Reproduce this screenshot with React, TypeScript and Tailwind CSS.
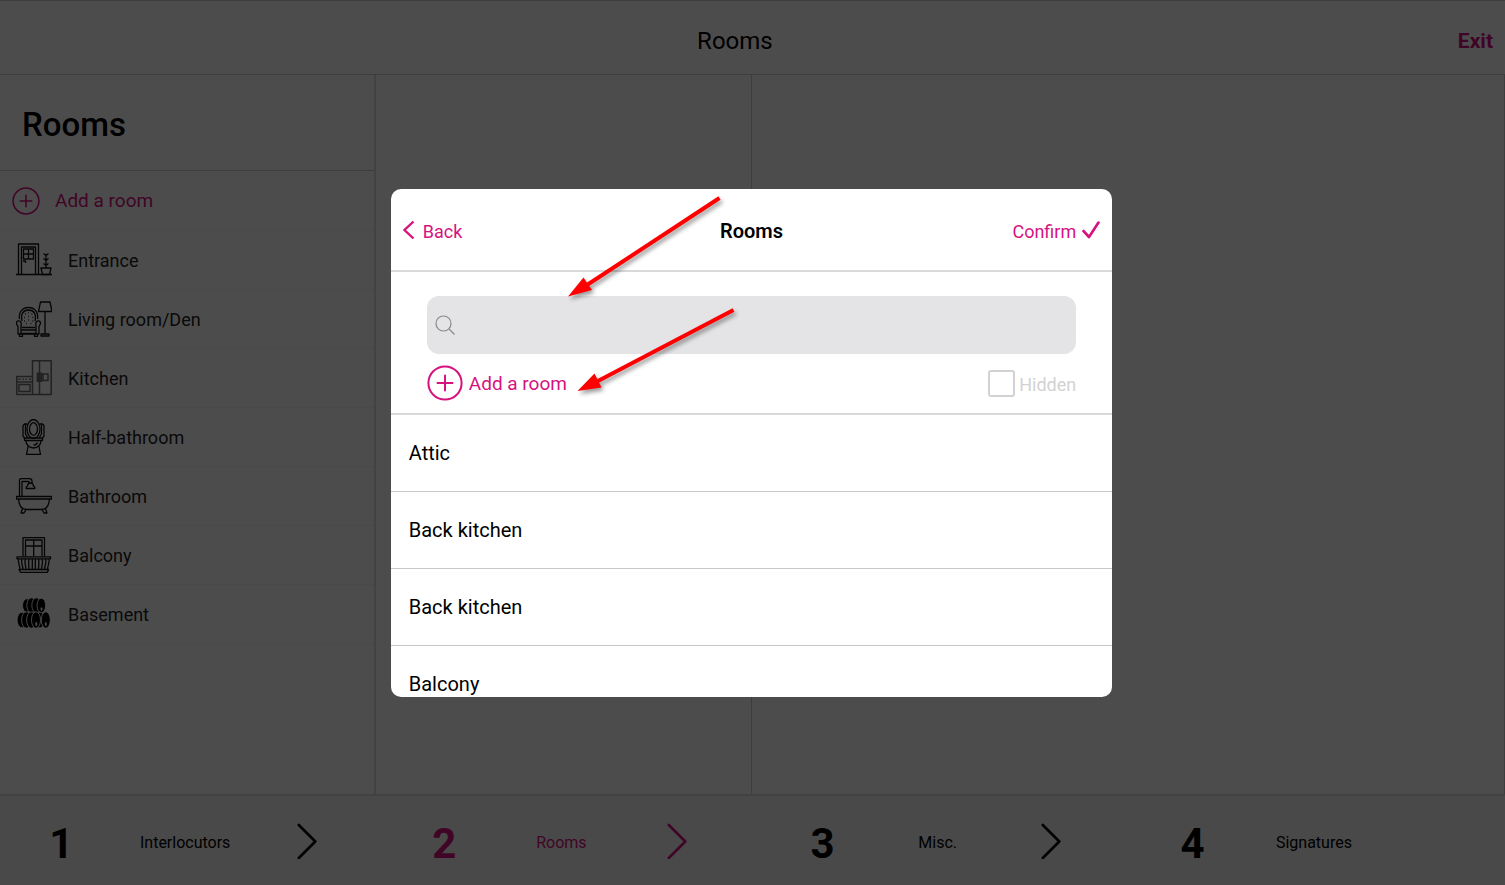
import type { ReactNode } from 'react'

type Room = { label: string; icon: ReactNode }
type Step = { label: string; active?: boolean }

const roomIcons = {
  entrance: (
    <>
      <path d="M0 32.5h36M2.5 32V2h20v30M5.5 32V5h14v27" />
      <path d="M7.5 7h10v10h-10zM12.5 7v10M7.5 12h10M7 19h2.5v2" />
      <path d="M25 26h10l-1.5 6.5h-7zM30 26V12M27.500 11.500l2.500 2 2.500-2M27.500 16.500l2.500 2 2.500-2M27.500 21.500l2.500 2 2.500-2" />
    </>
  ),
  living: (
    <>
      <path d="M24.500 1h9.500l2 9.500H22.500zM29 10.500v22.500M25 33h8v2h-8z" />
      <path d="M3.500 18c-1-7 3-11.500 9-11.500s10 4.500 9 11.500" />
      <path d="M6 20c-1.500-7 1-11 6.500-11s8 4 6.500 11" />
      <path d="M5 32.500h15V26c0-1.500-.5-3 0-4.500 1-2.500 4.500-2 4.500.5 0 2-1.500 2.500-1.500 4v7H2v-7c0-1.500-1.500-2-1.500-4 0-2.500 3.500-3 4.500-.5.5 1.500 0 3 0 4.500zM5 29h15M6 26.500h13M3.500 33v2.500h3V33M18.500 33v2.500h3V33" />
      <path d="M9 13h.8M12.300 11.500h.8M15.500 13h.8M8 16.500h.8M12.300 15.500h.8M16.500 16.500h.8M8 20h.8M12.300 19h.8M16.500 20h.8M10 22.500h.8M14.500 22.500h.8" />
    </>
  ),
  kitchen: (
    <g stroke="#707070" strokeWidth="1.500">
      <path d="M16.500.8h18.700v33.700H16.500zM23.500.8v33.700M.8 16.500h15.700v18H.8zM.8 22h15.700M3 24.500h11v7H3z" />
      <path d="M2.500 19.200h2M6.500 19.200h1.500M9.500 19.200H11M13 19.200h2M27 14h5v6.500h-5z" />
      <path d="M21.800 12.500v9.500M25.300 12.500v9.500" strokeWidth="2.400" />
    </g>
  ),
  toilet: (
    <>
      <path d="M11.500 5H8.500L7 6.500V17l1.500 2M23.500 5h3L28 6.500V17l-1.500 2M9.500 5v10l2.500 4M25.500 5v10L23 19" />
      <ellipse cx="17.500" cy="10" rx="6.500" ry="9.500" />
      <ellipse cx="17.500" cy="10" rx="4" ry="6.300" />
      <path d="M8.500 19h18v2.500h-18zM10 21.500c0 4 3 7.500 7.500 7.500s7.500-3.500 7.500-7.500M12 27.500l-1.500 8h14l-1.500-8M17.500 26c2 0 3.500-1 4-2.500" />
    </>
  ),
  bath: (
    <>
      <path d="M3.500 18.500V2.500c0-1.200.8-2 2-2H13c2 0 3 1 3 2.500V5M6 18.500V3.500h7V5" />
      <path d="M11.500 8c.3-2 1.300-3 3-3s2.700 1 3 3l1.300 1v1.500h-8.600V9z" />
      <path d="M.5 18.500h35V21H.5zM2.500 21c.5 7 2.500 10.500 8 10.500h15c5.500 0 7.500-3.500 8-10.500M6.500 30.500L5 35h3l2-3.500M29.500 30.500L31 35h-3l-2-3.500" />
    </>
  ),
  balcony: (
    <>
      <path d="M7 19.500V.7h21.500v18.800M9.500 19.500V3H26v16.500M17.700 3v16.500M10 9h16" />
      <path d="M1 19.800h33.500v2H1zM3 32.500h29.500L31.500 35.300h-27z" />
      <path d="M2.500 22c-1 3 1.500 7 1.500 10.500M6 22c-1.500 3 1 7 1 10.500M9.500 22c-1.500 3 .5 7 .5 10.500M13 22c-1 3 0 7 0 10.500M16.300 22v10.500M19.300 22v10.500M22.500 22c1 3 0 7 0 10.500M26 22c1.500 3-.5 7-.5 10.500M29.500 22c1.500 3-1 7-1 10.500M33 22c1 3-1.500 7-1.500 10.500" />
    </>
  ),
  barrels: (
    <g fill="#000" stroke="#fff" strokeWidth="0.900">
      <ellipse cx="11" cy="9.500" rx="4.500" ry="6.800" />
      <ellipse cx="15.500" cy="9.300" rx="4.700" ry="7.500" />
      <ellipse cx="20.500" cy="9.300" rx="4.700" ry="7.500" />
      <ellipse cx="25.300" cy="9.500" rx="4.300" ry="7.300" />
      <ellipse cx="6" cy="24" rx="4.900" ry="7.700" />
      <ellipse cx="10.500" cy="24" rx="4.900" ry="8.200" />
      <ellipse cx="15.500" cy="24" rx="4.900" ry="8.200" />
      <ellipse cx="24" cy="24" rx="4.500" ry="8" />
      <ellipse cx="20" cy="24" rx="4.500" ry="8.200" />
      <ellipse cx="29.800" cy="24" rx="4.500" ry="8.200" />
      <g fill="#fff" stroke="none">
        <ellipse cx="25.500" cy="13" rx="1" ry="1.700" />
        <ellipse cx="20.300" cy="28" rx="1" ry="1.900" />
        <ellipse cx="29.800" cy="28" rx="1" ry="1.900" />
      </g>
    </g>
  ),
}

const rooms: Room[] = [
  { label: 'Entrance', icon: roomIcons.entrance },
  { label: 'Living room/Den', icon: roomIcons.living },
  { label: 'Kitchen', icon: roomIcons.kitchen },
  { label: 'Half-bathroom', icon: roomIcons.toilet },
  { label: 'Bathroom', icon: roomIcons.bath },
  { label: 'Balcony', icon: roomIcons.balcony },
  { label: 'Basement', icon: roomIcons.barrels },
]

const roomTypes = ['Attic', 'Back kitchen', 'Back kitchen', 'Balcony']

const steps: Step[] = [
  { label: 'Interlocutors' },
  { label: 'Rooms', active: true },
  { label: 'Misc.' },
  { label: 'Signatures' },
]

function PlusCircle({ className }: { className: string }) {
  return (
    <svg viewBox="0 0 36 36" className={className} fill="none" stroke="currentColor" strokeWidth="2">
      <circle cx="18" cy="18" r="16.600" />
      <path d="M18 10.500v15M10.500 18h15" strokeLinecap="round" />
    </svg>
  )
}

function Sidebar() {
  return (
    <aside className="flex w-1/4 shrink-0 flex-col border-r-2 border-[#dcdcdc]">
      <h2 className="flex h-24 items-center border-b border-[#cccccc] px-[22px] pt-1 text-[33px] font-medium text-black">
        Rooms
      </h2>
      <button
        type="button"
        className="flex h-[60px] items-center gap-[15px] border-b border-[#f4f4f4] px-3 text-[19px] text-[#d6127f]"
      >
        <PlusCircle className="size-7" />
        <span className="pt-0.5">Add a room</span>
      </button>
      <ul>
        {rooms.map((room) => (
          <li key={room.label} className="border-b border-[#f4f4f4]">
            <a href="#room" className="flex h-[58px] items-center gap-4 px-4 text-[18px] text-[#222222]">
              <svg
                viewBox="0 0 36 36"
                className="size-9"
                fill="none"
                stroke="#111"
                strokeWidth="1.300"
                strokeLinejoin="round"
              >
                {room.icon}
              </svg>
              {room.label}
            </a>
          </li>
        ))}
      </ul>
    </aside>
  )
}

function StepBar() {
  return (
    <nav className="flex h-[91px] shrink-0 border-t-2 border-[#dcdcdc] bg-[#f4f4f4]">
      {steps.map((step, i) => (
        <a
          key={step.label}
          href="#step"
          className={`flex flex-1 items-center justify-around pr-[26px] pl-4 ${step.active ? 'text-[#d6127f]' : 'text-black'}`}
        >
          <span className="pt-1.5 text-[42px] leading-none font-bold">{i + 1}</span>
          <span className="pt-1 text-base">{step.label}</span>
          <svg
            viewBox="0 0 20 36"
            className={`h-9 w-5 ${i === steps.length - 1 ? 'invisible' : ''}`}
            fill="none"
            stroke="currentColor"
            strokeWidth="2.600"
            strokeLinecap="round"
            strokeLinejoin="round"
          >
            <path d="M1.800 2L18.300 18.500 1.800 35" />
          </svg>
        </a>
      ))}
    </nav>
  )
}

/* red pointers to the search box and the add button */
function Pointers() {
  return (
    <svg
      viewBox="0 0 360 220"
      className="pointer-events-none absolute top-0 left-0 h-[220px] w-[360px] drop-shadow-[2px_3px_2px_rgba(0,0,0,0.4)]"
      fill="#ff0000"
      stroke="#ff0000"
    >
      <path d="M328.500 9L196 96" strokeWidth="4" />
      <path d="M177 107.500L192.500 88.500 201 101z" stroke="none" />
      <path d="M342.500 121L206 192.500" strokeWidth="4" />
      <path d="M186.500 202L203.500 184.500 210.500 198.500z" stroke="none" />
    </svg>
  )
}

function RoomDialog() {
  return (
    <section
      role="dialog"
      aria-labelledby="dialog-title"
      className="relative flex max-h-[508px] w-[48%] flex-col overflow-hidden rounded-[10px] bg-white"
    >
      <header className="grid h-[83px] shrink-0 grid-cols-3 items-center border-b-2 border-[#d9d9d9] px-3 pt-0.5 text-[18px] text-[#d6127f]">
        <button type="button" className="flex items-center gap-2 justify-self-start">
          <svg viewBox="0 0 12 20" className="h-5 w-3" fill="none" stroke="currentColor" strokeWidth="2.400">
            <path d="M10.500 1.500L1.500 10l9 8.500" />
          </svg>
          <span className="pt-0.5">Back</span>
        </button>
        <h1 id="dialog-title" className="justify-self-center pt-0.5 text-xl font-semibold text-black">
          Rooms
        </h1>
        <button type="button" className="flex items-center gap-1.5 justify-self-end">
          <span className="pt-0.5">Confirm</span>
          <svg
            viewBox="0 0 18 18"
            className="size-[18px]"
            fill="none"
            stroke="currentColor"
            strokeWidth="2.600"
            strokeLinecap="round"
            strokeLinejoin="round"
          >
            <path d="M1.500 10L7 16 16.500 1.500" />
          </svg>
        </button>
      </header>

      <div className="shrink-0 border-b-2 border-[#d9d9d9] px-9 pt-6">
        <label className="flex h-[58px] items-center gap-2 rounded-xl bg-[#e4e4e6] px-2">
          <svg viewBox="0 0 20 20" className="size-5" fill="none" stroke="#8a8a8a" strokeWidth="1.200">
            <circle cx="8.500" cy="8.500" r="7.500" />
            <path d="M14 14l5.500 5.500" />
          </svg>
          <input type="text" aria-label="Search" className="min-w-0 flex-1 bg-transparent text-[19px] outline-none" />
        </label>
        <div className="flex h-[59px] items-center justify-between">
          <button type="button" className="flex items-center gap-1.5 text-[19px] text-[#d6127f]">
            <PlusCircle className="size-9" />
            <span className="pt-0.5">Add a room</span>
          </button>
          <label className="flex items-center gap-1 text-[18px] text-[#d2d2d2]">
            <input type="checkbox" className="size-[27px] appearance-none rounded-[3px] border-2 border-[#d2d2d2]" />
            <span className="pt-0.5">Hidden</span>
          </label>
        </div>
      </div>

      <ul className="overflow-hidden">
        {roomTypes.map((name, i) => (
          <li key={i} className="border-b border-[#c8c8c8]">
            <button type="button" className="flex h-[76px] w-full items-center px-[18px] text-xl text-black">
              {name}
            </button>
          </li>
        ))}
      </ul>
      <Pointers />
    </section>
  )
}

export default function App() {
  return (
    <div className="relative flex min-h-screen flex-col bg-white font-[Roboto,sans-serif]">
      <header className="flex h-[75px] shrink-0 items-center border-y border-[#cccccc] px-3 pt-1.5">
        <span className="flex-1 text-center text-2xl text-black">Rooms</span>
        <button type="button" className="pt-0.5 text-[21px] font-bold text-[#d6127f]">
          Exit
        </button>
      </header>
      <main className="flex flex-1 border-r border-[#cccccc]">
        <Sidebar />
        <div className="w-1/4 border-r border-[#cccccc]" />
        <div className="flex-1" />
      </main>
      <StepBar />
      <div className="absolute inset-0 flex items-center justify-center bg-black/70 pr-0.5">
        <RoomDialog />
      </div>
    </div>
  )
}
